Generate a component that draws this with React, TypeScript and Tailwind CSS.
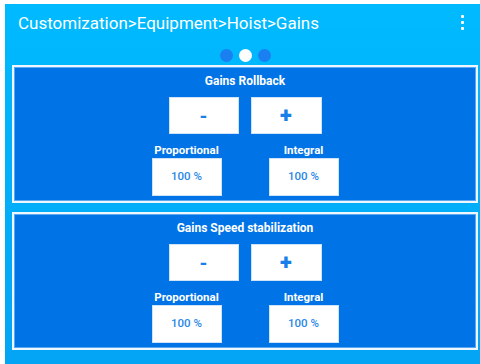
import React from "react";

function GainPanel({ title }: { title: string }) {
  return (
    <div className="h-[138px] border-2 border-[#eef7ff] bg-[#0073e6] shadow-[inset_0_0_0_1px_#5aa8f2] flex flex-col items-center pt-[6px]">
      <p className="text-[12px] leading-[16px] font-bold text-white">{title}</p>
      <div className="mt-[8px] flex gap-[12px]">
        <button className="w-[70px] h-[37px] bg-white border border-[#cfe3f8] text-[#1a7fe8] text-[20px] font-bold leading-none flex items-center justify-center">
          -
        </button>
        <button className="w-[71px] h-[37px] bg-white border border-[#cfe3f8] text-[#1a7fe8] text-[22px] font-black leading-none flex items-center justify-center">
          +
        </button>
      </div>
      <div className="mt-[9px] flex gap-[47px]">
        {["Proportional", "Integral"].map((label) => (
          <div key={label} className="flex flex-col items-center">
            <p className="text-[11.5px] leading-[14px] font-bold text-white">{label}</p>
            <div className="mt-[1px] w-[70px] h-[38px] bg-white border border-[#cfe3f8] flex items-center justify-center text-[11.5px] font-medium text-[#2a87e6]">
              100 %
            </div>
          </div>
        ))}
      </div>
    </div>
  );
}

export default function App() {
  return (
    <div
      className="w-[480px] h-[364px] bg-white pt-[4px] pl-[5px] overflow-hidden"
      style={{ fontFamily: "Roboto, 'Noto Sans', sans-serif" }}
    >
      <div className="h-full bg-gradient-to-b from-[#00baff] to-[#03a4f4] flex flex-col">
        <div className="h-[41px] flex items-start justify-between pt-[8px] pl-[13px] pr-[16px]">
          <h1 className="text-[17px] leading-[22px] text-white font-normal">
            Customization&gt;Equipment&gt;Hoist&gt;Gains
          </h1>
          <div className="flex flex-col gap-[3px] pt-[3px]">
            <span className="w-[3px] h-[3px] bg-white rounded-[1px]" />
            <span className="w-[3px] h-[3px] bg-white rounded-[1px]" />
            <span className="w-[3px] h-[3px] bg-white rounded-[1px]" />
          </div>
        </div>
        <div className="h-[20px] flex items-center justify-center gap-[6px] pl-[5px]">
          <span className="w-[13px] h-[13px] rounded-full bg-[#1a7ff0]" />
          <span className="w-[13px] h-[13px] rounded-full bg-white" />
          <span className="w-[13px] h-[13px] rounded-full bg-[#1a7ff0]" />
        </div>
        <div className="ml-[7px] mr-[2px] flex flex-col gap-[9px]">
          <GainPanel title="Gains Rollback" />
          <GainPanel title="Gains Speed stabilization" />
        </div>
      </div>
    </div>
  );
}
